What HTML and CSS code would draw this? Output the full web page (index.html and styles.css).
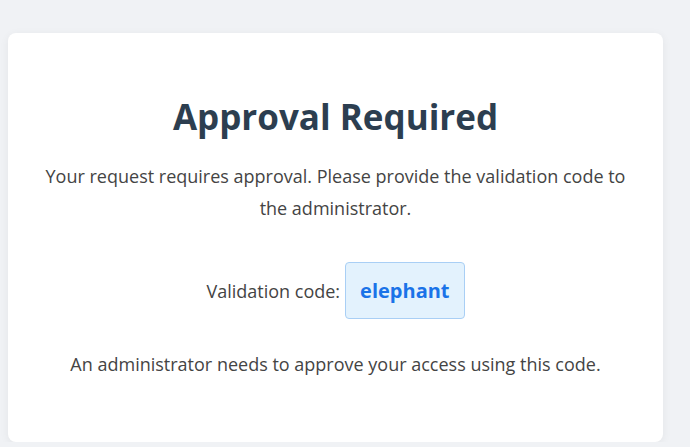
FILE: index.html
```html
<!doctype html>
<html lang="en">
<head>
  <meta charset="UTF-8">
  <meta name="viewport" content="width=device-width, initial-scale=1.0">
  <title>Approval Required</title>
  <link rel="stylesheet" href="styles.css">
</head>
<body>
  <div class="card">
    <h1 class="title">Approval Required</h1>
    <p class="message">Your request requires approval. Please provide the validation code to the administrator.</p>
    <div class="code-row">
      <span class="code-label">Validation code:</span>
      <span class="code-value">elephant</span>
    </div>
    <p class="note">An administrator needs to approve your access using this code.</p>
  </div>
</body>
</html>
```

FILE: styles.css
```css
body {
  margin: 0;
  padding: 33px 27px 0 8px;
  background: #f0f2f5;
  font-family: 'Open Sans', 'Noto Sans', Arial, sans-serif;
  color: #444;
}

.card {
  background: #ffffff;
  border-radius: 8px;
  box-shadow: 0 2px 10px rgba(0, 0, 0, 0.06);
  padding: 60px 30px 62px;
  text-align: center;
}

.title {
  margin: 0 0 20px;
  font-size: 35px;
  font-weight: 700;
  color: #2c3e50;
}

.message {
  margin: 0 0 38px;
  font-size: 18px;
  line-height: 32px;
}

.code-row {
  display: flex;
  justify-content: center;
  align-items: center;
  gap: 5px;
  font-size: 18px;
}

.code-value {
  padding: 14px 14px;
  font-size: 20px;
  font-weight: 700;
  color: #1a73e8;
  background: #e3f2fd;
  border: 1px solid #a9cff5;
  border-radius: 4px;
}

.note {
  margin: 29px 0 0;
  font-size: 18px;
  line-height: 32px;
}
```
